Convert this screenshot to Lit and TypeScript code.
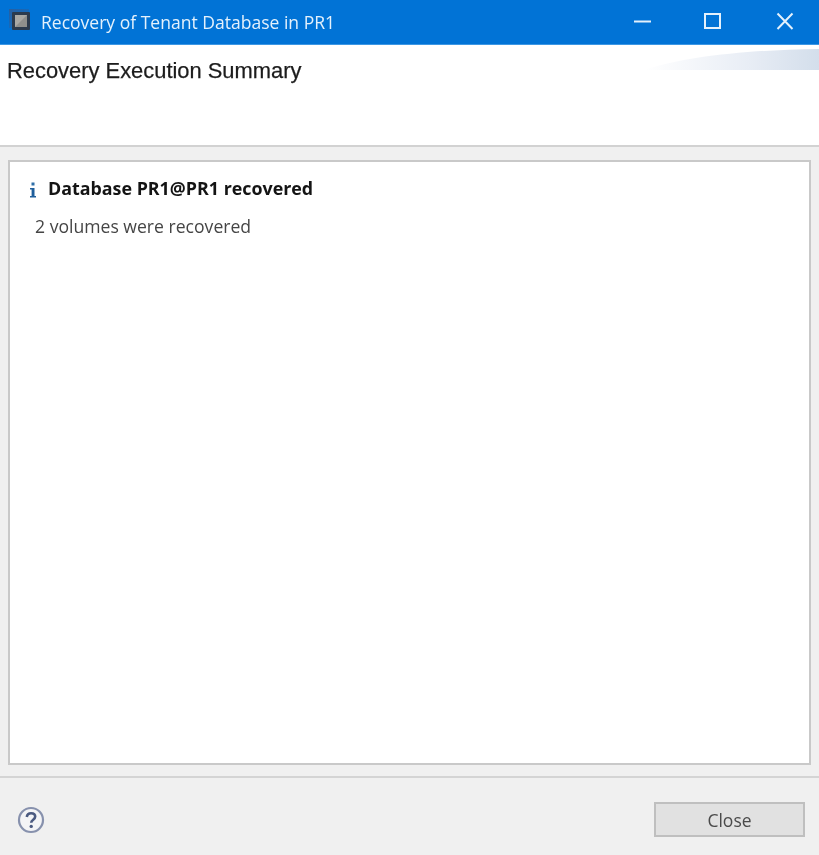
import { LitElement, css, html } from "lit";
import { customElement } from "lit/decorators.js";

@customElement("app-root")
export class AppRoot extends LitElement {
	static styles = css`
		:host {
			display: flex;
			flex-direction: column;
			width: 819px;
			height: 855px;
			overflow: hidden;
			background: #f0f0f0;
			font-family: "Open Sans", "Noto Sans", sans-serif;
			color: #1a1a1a;
			filter: blur(0.5px);
		}
		.titlebar {
			display: flex;
			align-items: center;
			flex: none;
			height: 45px;
			box-sizing: border-box;
			background: #0173d6;
			border-bottom: 1px solid #3d97e4;
			padding: 0 24px 0 7px;
			color: #e4f1fc;
		}
		.app-icon {
			flex: none;
			width: 24px;
			height: 24px;
			margin: 0 10px 6px 0;
		}
		.title {
			flex: 1;
			font-size: 17.55px;
			white-space: nowrap;
		}
		.win-controls {
			display: flex;
			gap: 51px;
		}
		.win-controls svg {
			display: block;
			width: 20px;
			height: 20px;
		}
		.banner {
			position: relative;
			flex: none;
			height: 102px;
			box-sizing: border-box;
			background: #fff;
			border-bottom: 2px solid #d2d2d2;
			padding: 14px 7px 0;
		}
		.banner svg {
			position: absolute;
			top: 2px;
			right: 0;
			width: 175px;
			height: 24px;
		}
		.banner h1 {
			position: relative;
			margin: 0;
			font: 400 21.9px/24px "Liberation Sans", Arial, sans-serif;
			color: #1c1c1c;
			-webkit-text-stroke: 0.25px #1c1c1c;
		}
		.content {
			flex: 1;
			display: flex;
			min-height: 0;
			padding: 13px 8px 11px;
		}
		.panel {
			flex: 1;
			box-sizing: border-box;
			background: #fff;
			border: 2px solid #c9c9c9;
			padding: 15px 18px;
		}
		.status {
			display: flex;
			align-items: center;
			gap: 11px;
			height: 22px;
			padding-left: 1px;
			font-size: 17.85px;
			font-weight: 700;
			color: #141414;
			white-space: nowrap;
		}
		.status svg {
			flex: none;
			width: 8px;
			height: 16px;
			margin-top: 3px;
		}
		.detail {
			margin-top: 16px;
			padding-left: 7px;
			font-size: 17.6px;
			line-height: 23px;
			color: #454545;
			white-space: nowrap;
		}
		.footer {
			flex: none;
			display: flex;
			align-items: center;
			justify-content: space-between;
			height: 79px;
			box-sizing: border-box;
			border-top: 2px solid #d4d4d4;
			padding: 6px 14px 0 17px;
		}
		.help {
			display: block;
			width: 28px;
			height: 28px;
		}
		.close {
			width: 151px;
			height: 35px;
			box-sizing: border-box;
			background: #e1e1e1;
			border: 2px solid #bfbfbf;
			padding: 0;
			font: 400 17.5px "Open Sans", "Noto Sans", sans-serif;
			color: #4a4a4a;
		}
	`;

	render() {
		return html`
			<div class="titlebar">
				<svg class="app-icon" viewBox="0 0 24 24">
					<defs>
						<linearGradient id="corner" x1="0" x2="1" y1="0" y2="1">
							<stop offset="0" stop-color="#2a5f9e" />
							<stop offset="1" stop-color="#0173d6" />
						</linearGradient>
					</defs>
					<path d="M2 2h20v4h-16v15h-4z" fill="url(#corner)" />
					<rect x="5" y="5" width="18" height="18" rx="1" fill="#2b3a4d" />
					<rect x="8" y="8" width="12" height="12" fill="#8f8f8c" />
					<path d="M8 8h12l-12 12z" fill="#a9a8a4" />
				</svg>
				<div class="title">Recovery of Tenant Database in PR1</div>
				<div class="win-controls">
					<svg viewBox="0 0 20 20"><path d="M1 9.5h17" stroke="#e4f1fc" stroke-width="2" fill="none" /></svg>
					<svg viewBox="0 0 20 20"><rect x="1" y="2" width="15" height="14" stroke="#e4f1fc" stroke-width="2" fill="none" /></svg>
					<svg viewBox="0 0 20 20"><path d="M2.5 1.5l15 15.5M17.5 1.5l-15 15.5" stroke="#e4f1fc" stroke-width="2" fill="none" /></svg>
				</div>
			</div>
			<div class="banner">
				<svg viewBox="0 0 175 24" preserveAspectRatio="none">
					<defs>
						<linearGradient id="swoosh" x1="0" x2="1" y1="0" y2="0">
							<stop offset="0" stop-color="#fff" />
							<stop offset="0.6" stop-color="#e8edf5" />
							<stop offset="1" stop-color="#d3deeb" />
						</linearGradient>
					</defs>
					<path d="M0 23C40 10 100 3 175 2V23z" fill="url(#swoosh)" />
				</svg>
				<h1>Recovery Execution Summary</h1>
			</div>
			<div class="content">
				<div class="panel">
					<div class="status">
						<svg viewBox="0 0 8 16">
							<rect x="2.5" y="0.5" width="3" height="3" fill="#2f6fa8" />
							<path d="M1 6h4.5v8H7v1.6H1V14h1.6V7.6H1z" fill="#1f5f9c" />
						</svg>
						<span>Database PR1@PR1 recovered</span>
					</div>
					<div class="detail">2 volumes were recovered</div>
				</div>
			</div>
			<div class="footer">
				<svg class="help" viewBox="0 0 28 28">
					<circle cx="14" cy="14" r="12" fill="#f4f4f6" stroke="#8791ad" stroke-width="2.2" />
					<path d="M9.8 11c.3-2.6 2-3.8 4.3-3.8s4.1 1.3 4.1 3.4c0 3.2-4 3-4 6.2" fill="none" stroke="#4b5a80" stroke-width="2.6" />
					<circle cx="14.2" cy="20.4" r="1.7" fill="#4b5a80" />
				</svg>
				<button class="close">Close</button>
			</div>
		`;
	}
}
